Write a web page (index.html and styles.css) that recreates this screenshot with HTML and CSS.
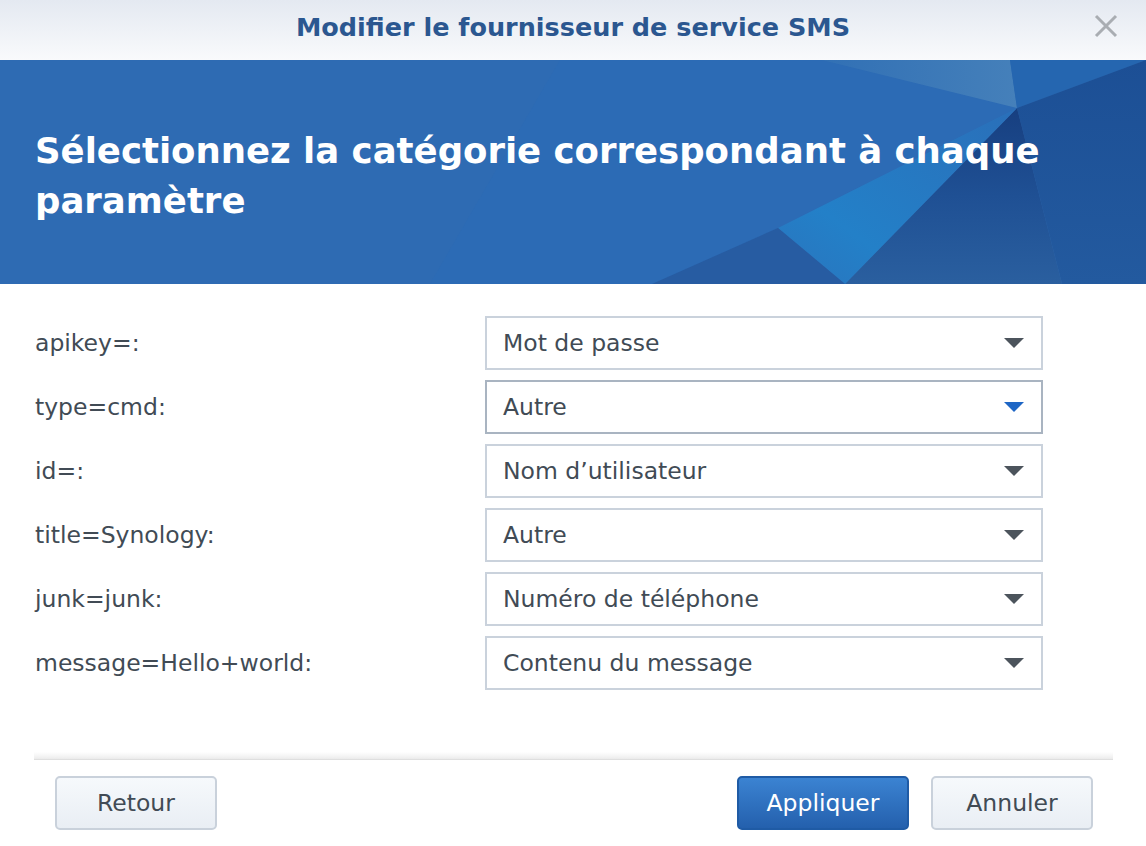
FILE: index.html
```html
<!DOCTYPE html>
<html lang="fr">
<head>
<meta charset="utf-8">
<title>Modifier le fournisseur de service SMS</title>
<link rel="stylesheet" href="styles.css">
</head>
<body>
<div class="dialog">
  <header class="titlebar">
    <h1 class="title">Modifier le fournisseur de service SMS</h1>
    <button class="close" aria-label="Fermer">
      <svg width="26" height="24" viewBox="0 0 26 24"><path d="M3 2 L23 22 M23 2 L3 22" stroke="#a9adb2" stroke-width="3" fill="none"/></svg>
    </button>
  </header>
  <section class="banner">
    <svg class="facets" viewBox="0 0 1146 224" preserveAspectRatio="none" aria-hidden="true">
      <defs>
        <linearGradient id="cyan" x1="1" y1="0" x2="0" y2="1">
          <stop offset="0" stop-color="#2a6fb9"/>
          <stop offset="0.7" stop-color="#2380c8"/>
          <stop offset="1" stop-color="#2a74bd"/>
        </linearGradient>
        <linearGradient id="dark" x1="0" y1="0" x2="0" y2="1">
          <stop offset="0" stop-color="#173f80"/>
          <stop offset="0.5" stop-color="#1f5094"/>
          <stop offset="1" stop-color="#2a5f9f"/>
        </linearGradient>
        <linearGradient id="light" x1="0" y1="0" x2="1" y2="0">
          <stop offset="0" stop-color="#3170b5"/>
          <stop offset="1" stop-color="#4580ba"/>
        </linearGradient>
        <linearGradient id="right" x1="0" y1="0" x2="0" y2="1">
          <stop offset="0" stop-color="#1c4f95"/>
          <stop offset="1" stop-color="#235a9f"/>
        </linearGradient>
      </defs>
      <rect width="1146" height="224" fill="#2e6bb3"/>
      <polygon points="560,0 822,0 1017,48 778,168 652,224 430,224" fill="#2c6bb5"/>
      <polygon points="822,0 1010,0 1017,48" fill="url(#light)"/>
      <polygon points="1010,0 1146,0 1017,48" fill="#2566b0"/>
      <polygon points="1146,0 1146,224 1062,224 1017,48" fill="url(#right)"/>
      <polygon points="1017,48 1062,224 845,224" fill="url(#dark)"/>
      <polygon points="1017,48 778,168 845,224" fill="url(#cyan)"/>
      <polygon points="778,168 845,224 652,224" fill="#275ca2"/>
    </svg>
    <h2 class="heading">Sélectionnez la catégorie correspondant à chaque paramètre</h2>
  </section>
  <form class="form">
    <div class="row">
      <label class="label">apikey=:</label>
      <div class="select"><span class="value">Mot de passe</span><span class="arrow"></span></div>
    </div>
    <div class="row">
      <label class="label">type=cmd:</label>
      <div class="select focused"><span class="value">Autre</span><span class="arrow"></span></div>
    </div>
    <div class="row">
      <label class="label">id=:</label>
      <div class="select"><span class="value">Nom d’utilisateur</span><span class="arrow"></span></div>
    </div>
    <div class="row">
      <label class="label">title=Synology:</label>
      <div class="select"><span class="value">Autre</span><span class="arrow"></span></div>
    </div>
    <div class="row">
      <label class="label">junk=junk:</label>
      <div class="select"><span class="value">Numéro de téléphone</span><span class="arrow"></span></div>
    </div>
    <div class="row">
      <label class="label">message=Hello+world:</label>
      <div class="select"><span class="value">Contenu du message</span><span class="arrow"></span></div>
    </div>
  </form>
  <div class="separator"></div>
  <footer class="footer">
    <button class="btn">Retour</button>
    <div class="spacer"></div>
    <button class="btn primary">Appliquer</button>
    <button class="btn">Annuler</button>
  </footer>
</div>
</body>
</html>
```
FILE: styles.css
```css
* { box-sizing: border-box; }
html, body { margin: 0; padding: 0; background: #ffffff; }
body {
  width: 1146px;
  height: 846px;
  overflow: hidden;
  font-family: "DejaVu Sans", Verdana, sans-serif;
  color: #414b55;
}
.dialog { display: flex; flex-direction: column; height: 846px; }

.titlebar {
  position: relative;
  height: 60px;
  display: flex;
  align-items: center;
  justify-content: center;
  background: linear-gradient(#e4e9f1, #f9fafc);
}
.title {
  margin: 0;
  font-size: 25.5px;
  font-weight: bold;
  color: #2b5790;
  line-height: 1;
  padding-bottom: 4px;
}
.close {
  position: absolute;
  right: 27px;
  top: 14px;
  width: 26px;
  height: 24px;
  padding: 0;
  border: 0;
  background: none;
  display: flex;
}

.banner {
  position: relative;
  height: 224px;
  overflow: hidden;
  padding: 66px 35px 0;
}
.facets {
  position: absolute;
  left: 0;
  top: 0;
  width: 100%;
  height: 100%;
}
.heading {
  position: relative;
  margin: 0;
  font-size: 35.5px;
  line-height: 50px;
  font-weight: bold;
  color: #ffffff;
  max-width: 1040px;
}

.form {
  display: flex;
  flex-direction: column;
  gap: 10px;
  padding: 32px 103px 0 35px;
}
.row {
  display: flex;
  align-items: center;
  height: 54px;
}
.label {
  width: 450px;
  font-size: 23.5px;
  color: #414b55;
}
.select {
  flex: 1;
  height: 54px;
  border: 2px solid #cad2dc;
  display: flex;
  align-items: center;
  padding: 0 17px 0 16px;
  background: #ffffff;
}
.select.focused { border-color: #a9b4c1; }
.value { flex: 1; font-size: 23.5px; color: #414b55; }
.arrow {
  width: 0;
  height: 0;
  border-left: 10px solid transparent;
  border-right: 10px solid transparent;
  border-top: 10px solid #4c545c;
}
.focused .arrow { border-top-color: #1e66c5; }

.separator {
  margin: 62px 33px 0 34px;
  height: 8px;
  background: linear-gradient(#ffffff, #eeeeee 80%, #d8d8d8);
}

.footer {
  display: flex;
  align-items: center;
  gap: 22px;
  padding: 16px 53px 0 55px;
}
.spacer { flex: 1; }
.btn {
  height: 54px;
  width: 162px;
  border: 2px solid #c9d1db;
  border-radius: 5px;
  background: linear-gradient(#f6f9fc, #e9eef4);
  font-family: "DejaVu Sans", Verdana, sans-serif;
  font-size: 23.5px;
  color: #414b55;
  padding: 0;
}
.btn.primary {
  width: 172px;
  border-color: #1f5ba5;
  background: linear-gradient(#3b83d2, #2460ad);
  color: #ffffff;
}
```
